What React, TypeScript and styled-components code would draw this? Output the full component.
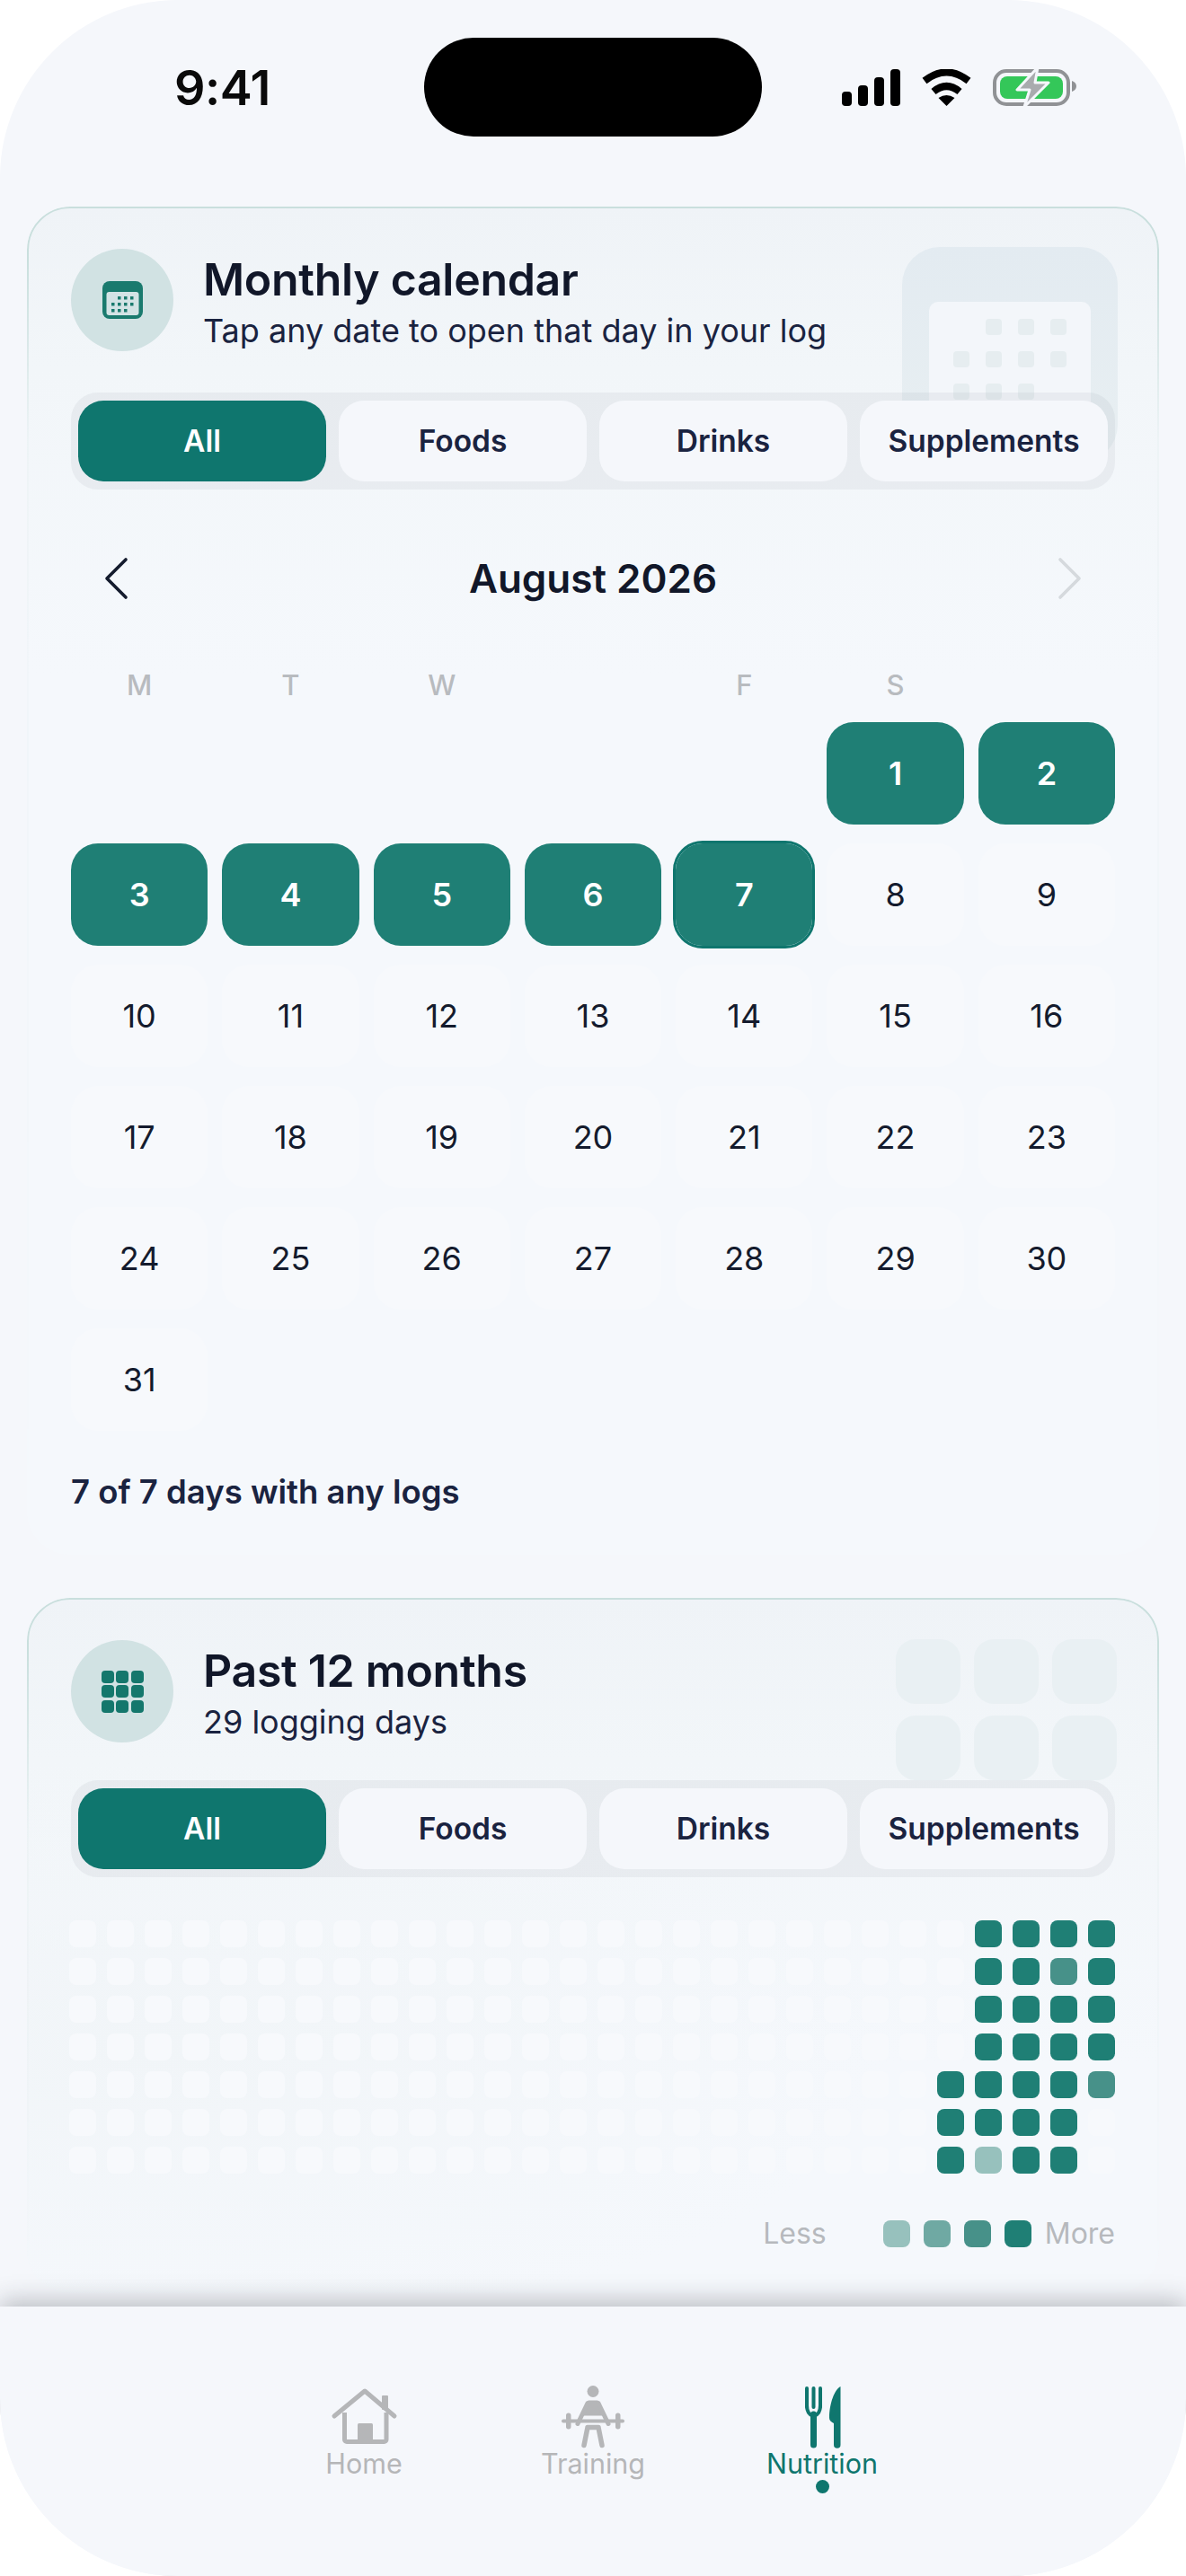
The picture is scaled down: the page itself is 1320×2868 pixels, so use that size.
import { FC } from "react";
import styled, { createGlobalStyle } from "styled-components";

type Level = 0 | 1 | 2 | 3 | 4;

const levelColors: Record<Level, string> = {
  0: "#f7f9fc",
  1: "#97c1bd",
  2: "#6fa9a3",
  3: "#479189",
  4: "#1f7f75",
};

const tabs = ["All", "Foods", "Drinks", "Supplements"];
const weekdays = ["M", "T", "W", "", "F", "S", ""];

// first column holds blanks so that Aug 1 lands on the sixth cell
const days: (number | null)[] = [
  null,
  null,
  null,
  null,
  null,
  ...Array.from({ length: 31 }, (_, i) => i + 1),
];

const heatOverrides: Record<string, Level> = {
  "0-24": 4, "0-25": 4, "0-26": 4, "0-27": 4,
  "1-24": 4, "1-25": 4, "1-26": 3, "1-27": 4,
  "2-24": 4, "2-25": 4, "2-26": 4, "2-27": 4,
  "3-24": 4, "3-25": 4, "3-26": 4, "3-27": 4,
  "4-23": 4, "4-24": 4, "4-25": 4, "4-26": 4, "4-27": 3,
  "5-23": 4, "5-24": 4, "5-25": 4, "5-26": 4,
  "6-23": 4, "6-24": 1, "6-25": 4, "6-26": 4,
};

const heatCells: Level[] = Array.from({ length: 7 * 28 }, (_, i) => {
  const row = Math.floor(i / 28);
  const col = i % 28;
  return heatOverrides[`${row}-${col}`] ?? 0;
});

const Tabs: FC<{ top: number }> = ({ top }) => (
  <TabBar $top={top}>
    {tabs.map((t, i) => (
      <Tab key={t} $active={i === 0}>
        {t}
      </Tab>
    ))}
  </TabBar>
);

const App: FC = () => {
  return (
    <>
      <GlobalStyle />
      <Phone>
        <StatusBar>
          <Time>9:41</Time>
          <Island />
          <StatusIcons>
            <svg width="65" height="41" viewBox="0 0 65 41" fill="#000">
              <rect x="0" y="25" width="11" height="16" rx="4" />
              <rect x="18" y="18" width="11" height="23" rx="4" />
              <rect x="36" y="9" width="11" height="32" rx="4" />
              <rect x="54" y="0" width="11" height="41" rx="4" />
            </svg>
            <svg width="57" height="41" viewBox="0 0 57 41" fill="none">
              <path d="M4 13Q28.5 -6 53 13" stroke="#000" strokeWidth="8" />
              <path d="M14 25Q28.5 13 43 25" stroke="#000" strokeWidth="8" />
              <path d="M19.5 32Q28.5 26 37.5 32L28.5 41Z" fill="#000" />
            </svg>
            <svg width="93" height="44" viewBox="0 0 93 44" fill="none">
              <rect x="2" y="4" width="82" height="37" rx="13" stroke="#909295" strokeWidth="4" />
              <rect x="8" y="10" width="70" height="25" rx="8" fill="#34c759" />
              <path d="M88 15c3 1 5 3 5 6s-2 5-5 6z" fill="#909295" />
              <path
                d="M50 0L27 25H41L35 44L62 17H47Z"
                fill="#a9abae"
                stroke="#f5f7fb"
                strokeWidth="3"
                strokeLinejoin="round"
              />
            </svg>
          </StatusIcons>
        </StatusBar>

        <Main>
          <Card>
            <CalendarDecor>
              <DecorSheet>
                {[0, 1, 1, 1, 1, 1, 1, 1, 1, 1, 1, 0].map((on, i) => (
                  <DecorDot key={i} $on={!!on} />
                ))}
              </DecorSheet>
            </CalendarDecor>
            <Header>
              <IconCircle>
                <svg width="45" height="42" viewBox="0 0 45 42">
                  <rect width="45" height="42" rx="8" fill="#1a7a6e" />
                  <rect x="4.5" y="12" width="36" height="26" rx="3" fill="#d3e3e5" />
                  {[
                    [17, 17], [24, 17], [31, 17],
                    [10, 24], [17, 24], [24, 24], [31, 24],
                    [10, 31], [17, 31], [24, 31],
                  ].map(([x, y]) => (
                    <rect key={`${x}-${y}`} x={x} y={y} width="3.5" height="3.5" fill="#1a7a6e" />
                  ))}
                </svg>
              </IconCircle>
              <HeaderText>
                <Title>Monthly calendar</Title>
                <Subtitle>Tap any date to open that day in your log</Subtitle>
              </HeaderText>
            </Header>
            <Tabs top={46} />

            <MonthRow>
              <svg width="28" height="48" viewBox="0 0 28 48" fill="none">
                <path d="M25 3L4 24L25 45" stroke="#141b2d" strokeWidth="3.6" strokeLinecap="round" strokeLinejoin="round" />
              </svg>
              <MonthName>August 2026</MonthName>
              <svg width="28" height="48" viewBox="0 0 28 48" fill="none">
                <path d="M3 3L24 24L3 45" stroke="#d5d9dd" strokeWidth="3.6" strokeLinecap="round" strokeLinejoin="round" />
              </svg>
            </MonthRow>

            <WeekRow>
              {weekdays.map((d, i) => (
                <Weekday key={i}>{d}</Weekday>
              ))}
            </WeekRow>

            <DayGrid>
              {days.map((d, i) =>
                d === null ? (
                  <DayCell key={i} $state="blank" />
                ) : (
                  <DayCell key={i} $state={d === 7 ? "today" : d < 7 ? "logged" : "idle"}>
                    {d}
                  </DayCell>
                )
              )}
            </DayGrid>

            <Summary>7 of 7 days with any logs</Summary>
          </Card>

          <HeatCard>
            <TilesDecor>
              {Array.from({ length: 6 }).map((_, i) => (
                <DecorTile key={i} />
              ))}
            </TilesDecor>
            <Header>
              <IconCircle>
                <GridGlyph>
                  {Array.from({ length: 9 }).map((_, i) => (
                    <GridGlyphTile key={i} />
                  ))}
                </GridGlyph>
              </IconCircle>
              <HeaderText>
                <Title>Past 12 months</Title>
                <Subtitle>29 logging days</Subtitle>
              </HeaderText>
            </Header>
            <Tabs top={42} />

            <HeatGrid>
              {heatCells.map((l, i) => (
                <HeatCell key={i} $level={l} />
              ))}
            </HeatGrid>

            <Legend>
              <LegendLabel>Less</LegendLabel>
              <LegendSwatches>
                {([1, 2, 3, 4] as Level[]).map((l) => (
                  <HeatCell key={l} $level={l} />
                ))}
              </LegendSwatches>
              <LegendLabel>More</LegendLabel>
            </Legend>
          </HeatCard>
        </Main>

        <BottomNav>
          <NavItem>
            <NavIcon>
              <svg width="80" height="72" viewBox="0 0 80 72" fill="none">
                <path d="M7 34L41 6L74 34" stroke="currentColor" strokeWidth="5" strokeLinecap="round" strokeLinejoin="round" />
                <rect x="60" y="11" width="7" height="16" rx="1" fill="currentColor" />
                <path d="M18.5 30V60a2.5 2.5 0 0 0 2.5 2.5H62.5a2.5 2.5 0 0 0 2.5-2.5V30" stroke="currentColor" strokeWidth="5" />
                <rect x="33" y="42" width="17" height="21" rx="1.5" fill="currentColor" />
              </svg>
            </NavIcon>
            <NavLabel>Home</NavLabel>
          </NavItem>
          <NavItem>
            <NavIcon>
              <svg width="80" height="76" viewBox="0 3.5 80 76" fill="none">
                <circle cx="40" cy="10" r="6.5" fill="currentColor" />
                <path d="M35 21H45L50 36H30Z" fill="currentColor" stroke="currentColor" strokeWidth="2" strokeLinejoin="round" />
                <path d="M34 23L23 46M46 23L57 46" stroke="currentColor" strokeWidth="5" strokeLinecap="round" />
                <path d="M7 43H73" stroke="currentColor" strokeWidth="4" strokeLinecap="round" />
                <rect x="10" y="34" width="5.5" height="18" rx="2.7" fill="currentColor" />
                <rect x="65" y="34" width="5.5" height="18" rx="2.7" fill="currentColor" />
                <path d="M34 50H46M34 50L30 70M46 50L50 70" stroke="currentColor" strokeWidth="5.5" strokeLinecap="round" strokeLinejoin="round" />
              </svg>
            </NavIcon>
            <NavLabel>Training</NavLabel>
          </NavItem>
          <NavItem $active>
            <NavIcon>
              <svg width="48" height="72" viewBox="0 0 48 72" fill="none">
                <path d="M7 3V24M14.5 3V24M22 3V24" stroke="currentColor" strokeWidth="4" strokeLinecap="round" />
                <path d="M7 22C7 29 10 33 14.5 34C19 33 22 29 22 22" stroke="currentColor" strokeWidth="4" />
                <path d="M14.5 32V66" stroke="currentColor" strokeWidth="7" strokeLinecap="round" />
                <path d="M44.5 1C38 4 32 20 32 36C32 39 34 40 37 42V66a3.7 3.7 0 0 0 7.5 0Z" fill="currentColor" />
              </svg>
            </NavIcon>
            <NavLabel>Nutrition</NavLabel>
            <NavDot />
          </NavItem>
        </BottomNav>
      </Phone>
    </>
  );
};

export default App;

const GlobalStyle = createGlobalStyle`
  html, body {
    margin: 0;
    padding: 0;
    background: #ffffff;
  }
  * {
    box-sizing: border-box;
  }
`;

const Phone = styled.div`
  width: 1320px;
  height: 2868px;
  border-radius: 198px;
  overflow: hidden;
  background-color: #f5f7fb;
  display: flex;
  flex-direction: column;
  font-family: "Inter", "Liberation Sans", sans-serif;
  color: #141b2d;
`;

const StatusBar = styled.div`
  flex: 0 0 230px;
  display: grid;
  grid-template-columns: 472px 376px 1fr;
  padding-top: 42px;
  align-items: start;
`;

const Time = styled.div`
  padding: 29px 0 0 194px;
  font-size: 54px;
  line-height: 54px;
  font-weight: 600;
  letter-spacing: -0.5px;
  color: #0a0a0a;
`;

const Island = styled.div`
  height: 110px;
  border-radius: 55px;
  background-color: #000000;
`;

const StatusIcons = styled.div`
  display: flex;
  align-items: center;
  gap: 23px;
  padding: 33px 0 0 89px;
`;

const Main = styled.div`
  flex: 1;
  min-height: 0;
  overflow: hidden;
  padding: 0 30px;
  display: flex;
  flex-direction: column;
  gap: 48px;
`;

const Card = styled.section`
  position: relative;
  flex: none;
  padding: 47px 49px 48px;
  border-radius: 48px;
  background: linear-gradient(180deg, #eff3f7 0, #f2f6f9 180px, #f5f8fc 520px);

  &::before {
    content: "";
    position: absolute;
    inset: 0;
    border-radius: inherit;
    border: 2px solid #c9dfdd;
    pointer-events: none;
    -webkit-mask-image: linear-gradient(180deg, #000 0, #000 60px, rgba(0, 0, 0, 0.12) 260px, transparent 100%);
    mask-image: linear-gradient(180deg, #000 0, #000 60px, rgba(0, 0, 0, 0.12) 260px, transparent 100%);
  }
`;

// the heat map sits on a soft darker patch that fades out to the right
const HeatCard = styled(Card)`
  background:
    radial-gradient(ellipse 820px 320px at 140px 500px, #f1f5f8 0, rgba(241, 245, 248, 0) 100%),
    linear-gradient(180deg, #eff3f7 0, #f2f6f9 180px, #f5f8fc 520px);
`;

const CalendarDecor = styled.div`
  position: absolute;
  top: 45px;
  right: 46px;
  width: 240px;
  height: 240px;
  border-radius: 42px;
  background: linear-gradient(180deg, #e3ebf1 0, #e8eff2 100%);
  padding: 61px 30px 0;
`;

const DecorSheet = styled.div`
  height: 179px;
  border-radius: 10px 10px 0 0;
  background-color: #f3f6fa;
  padding: 19px 27px;
  display: grid;
  grid-template-columns: repeat(4, 18px);
  grid-auto-rows: 18px;
  gap: 18px;
`;

const DecorDot = styled.div<{ $on: boolean }>`
  border-radius: 4px;
  background-color: ${(p) => (p.$on ? "#e6edf0" : "transparent")};
`;

const TilesDecor = styled.div`
  position: absolute;
  top: 46px;
  right: 47px;
  display: grid;
  grid-template-columns: repeat(3, 72px);
  grid-auto-rows: 72px;
  column-gap: 15px;
  row-gap: 13px;
`;

const DecorTile = styled.div`
  border-radius: 22px;
  background-color: #e9f0f3;
`;

const Header = styled.div`
  position: relative;
  height: 114px;
  display: flex;
  align-items: center;
  gap: 33px;
`;

const IconCircle = styled.div`
  flex: none;
  width: 114px;
  height: 114px;
  border-radius: 50%;
  background-color: #d1e2e3;
  display: flex;
  align-items: center;
  justify-content: center;
`;

const HeaderText = styled.div`
  display: flex;
  flex-direction: column;
  gap: 6px;
  padding-top: 3px;
`;

const Title = styled.h2`
  margin: 0;
  font-size: 50px;
  line-height: 58px;
  font-weight: 600;
  letter-spacing: -0.3px;
  color: #111729;
`;

const Subtitle = styled.p`
  margin: 0;
  font-size: 36px;
  line-height: 44px;
  font-weight: 400;
  color: #1a2340;
`;

const GridGlyph = styled.div`
  display: grid;
  grid-template-columns: repeat(3, 14px);
  grid-auto-rows: 14px;
  gap: 2.5px;
`;

const GridGlyphTile = styled.div`
  border-radius: 4px;
  background-color: #14776c;
`;

const TabBar = styled.div<{ $top: number }>`
  position: relative;
  margin-top: ${(p) => p.$top}px;
  height: 108px;
  padding: 9px 8px;
  border-radius: 30px;
  background-color: rgba(120, 130, 140, 0.09);
  display: grid;
  grid-template-columns: repeat(4, 1fr);
  gap: 14px;
`;

const Tab = styled.div<{ $active?: boolean }>`
  border-radius: 28px;
  background-color: ${(p) => (p.$active ? "#0f766e" : "#f5f7fb")};
  color: ${(p) => (p.$active ? "#ffffff" : "#1a2340")};
  font-size: 33.5px;
  font-weight: 600;
  display: flex;
  align-items: center;
  justify-content: center;
`;

const MonthRow = styled.div`
  margin-top: 75px;
  height: 48px;
  padding: 0 36px;
  display: flex;
  align-items: center;
  justify-content: space-between;
`;

const MonthName = styled.div`
  font-size: 44px;
  font-weight: 600;
  color: #111729;
`;

const WeekRow = styled.div`
  margin-top: 75px;
  height: 40px;
  display: grid;
  grid-template-columns: repeat(7, 1fr);
  gap: 16px;
`;

const Weekday = styled.div`
  font-size: 31px;
  line-height: 40px;
  font-weight: 500;
  text-align: center;
  color: #b8bbbf;
`;

const DayGrid = styled.div`
  margin-top: 21px;
  display: grid;
  grid-template-columns: repeat(7, 1fr);
  grid-auto-rows: 114px;
  column-gap: 16px;
  row-gap: 21px;
`;

const DayCell = styled.div<{ $state: "blank" | "idle" | "logged" | "today" }>`
  display: flex;
  align-items: center;
  justify-content: center;
  border-radius: 30px;
  font-size: 36px;
  font-weight: ${(p) => (p.$state === "logged" || p.$state === "today" ? 600 : 400)};
  color: ${(p) => (p.$state === "logged" || p.$state === "today" ? "#ffffff" : "#141b2d")};
  background-color: ${(p) =>
    p.$state === "logged" || p.$state === "today"
      ? "#1f7f75"
      : p.$state === "idle"
      ? "#f7f9fc"
      : "transparent"};
  ${(p) => p.$state === "today" && "outline: 3px solid #0f766e; outline-offset: 0;"}
`;

const Summary = styled.div`
  margin-top: 46px;
  font-size: 36.5px;
  line-height: 44px;
  font-weight: 600;
  color: #1a2340;
`;

const HeatGrid = styled.div`
  margin-top: 48px;
  display: grid;
  grid-template-columns: repeat(28, 30px);
  grid-auto-rows: 30px;
  column-gap: 12px;
  row-gap: 12px;
  justify-content: end;
`;

const HeatCell = styled.div<{ $level: Level }>`
  width: 30px;
  height: 30px;
  border-radius: 8px;
  background-color: ${(p) => levelColors[p.$level]};
`;

const Legend = styled.div`
  margin-top: 49px;
  display: flex;
  align-items: center;
  justify-content: flex-end;
`;

const LegendLabel = styled.span`
  font-size: 32px;
  line-height: 36px;
  color: #b6b9bd;
`;

const LegendSwatches = styled.div`
  display: flex;
  gap: 15px;
  margin: 0 15px 0 63px;
`;

const BottomNav = styled.nav`
  position: relative;
  flex: 0 0 300px;
  background-color: #f5f7fb;
  box-shadow: 0 -6px 26px rgba(30, 35, 45, 0.28);
  padding-top: 88px;
  display: flex;
  justify-content: center;
  align-items: flex-start;
`;

const NavItem = styled.div<{ $active?: boolean }>`
  width: 255px;
  display: flex;
  flex-direction: column;
  align-items: center;
  color: ${(p) => (p.$active ? "#0f766e" : "#b5b6b8")};
`;

const NavIcon = styled.div`
  height: 72px;
  display: flex;
  justify-content: center;
`;

const NavLabel = styled.span`
  font-size: 30.5px;
  line-height: 30px;
`;

const NavDot = styled.span`
  margin-top: 3px;
  width: 15px;
  height: 15px;
  border-radius: 50%;
  background-color: #0f766e;
`;
